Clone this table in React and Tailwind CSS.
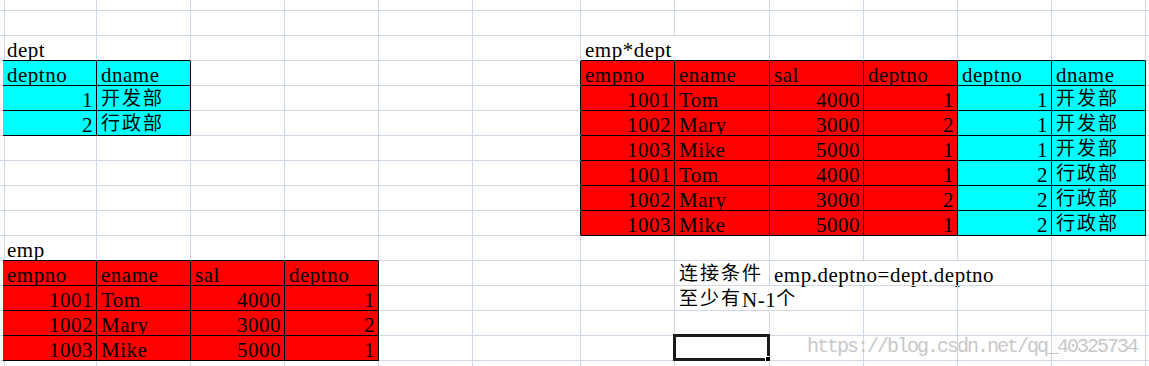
const CJK = /([\u3400-\u9fff]+)/;

const emps = [
  [1001, 'Tom', 4000, 1],
  [1002, 'Mary', 3000, 2],
  [1003, 'Mike', 5000, 1],
];
const depts = [
  [1, '开发部'],
  [2, '行政部'],
];

// sheet contents keyed by "row-col"
const cells = {};
const put = (r, c, text, right = false) => {
  cells[`${r}-${c}`] = { text: String(text), right };
};

put(2, 1, 'dept');
put(3, 1, 'deptno');
put(3, 2, 'dname');
depts.forEach(([no, name], i) => {
  put(4 + i, 1, no, true);
  put(4 + i, 2, name);
});

put(2, 7, 'emp*dept');
['empno', 'ename', 'sal', 'deptno', 'deptno', 'dname'].forEach((t, i) => put(3, 7 + i, t));
let row = 4;
depts.forEach((d) =>
  emps.forEach((e) => {
    put(row, 7, e[0], true);
    put(row, 8, e[1]);
    put(row, 9, e[2], true);
    put(row, 10, e[3], true);
    put(row, 11, d[0], true);
    put(row, 12, d[1]);
    row++;
  })
);

put(10, 1, 'emp');
['empno', 'ename', 'sal', 'deptno'].forEach((t, i) => put(11, 1 + i, t));
emps.forEach((e, i) => {
  put(12 + i, 1, e[0], true);
  put(12 + i, 2, e[1]);
  put(12 + i, 3, e[2], true);
  put(12 + i, 4, e[3], true);
});

put(11, 8, '连接条件');
put(11, 9, 'emp.deptno=dept.deptno');
put(12, 8, '至少有N-1个');

const fill = (r, c) => {
  if (r >= 3 && r <= 5 && c >= 1 && c <= 2) return 'cyan';
  if (r >= 3 && r <= 9 && c >= 7 && c <= 10) return 'red';
  if (r >= 3 && r <= 9 && c >= 11 && c <= 12) return 'cyan';
  if (r >= 11 && r <= 14 && c >= 1 && c <= 4) return 'red';
  return null;
};

// gridlines hidden where text spills into the next cell
const spill = new Set(['2-7', '11-9', '11-10', '12-8']);

const ROWS = 16;
const COLS = 14;
const SELECTED = '14-8';

const Text = ({ s }) =>
  s.split(CJK).map((part, i) =>
    CJK.test(part) ? (
      <span
        key={i}
        className="font-['Noto_Sans_CJK_SC',sans-serif] text-[19px] leading-[14px] tracking-[2px] align-[2px]"
      >
        {part}
      </span>
    ) : (
      part
    )
  );

const Cell = ({ r, c }) => {
  const key = `${r}-${c}`;
  const cell = cells[key];
  const f = fill(r, c);
  const bg = f === 'red' ? 'bg-[#ff0000]' : f === 'cyan' ? 'bg-[#00ffff]' : '';

  let right = 'border-r border-r-[#d0d7e5]';
  if (c === COLS - 1) right = '';
  else if (spill.has(key)) right = 'border-r border-r-transparent';
  else if (f || fill(r, c + 1)) right = 'border-r border-r-black';

  let bottom = 'border-b border-b-[#d0d7e5]';
  if (r === ROWS - 1) bottom = '';
  else if (f || fill(r + 1, c)) bottom = 'border-b border-b-black';

  const align = cell?.right ? 'justify-end pr-[3px]' : 'justify-start pl-[4px]';
  const pos = key === SELECTED ? 'relative' : '';

  return (
    <div className={`flex min-w-0 items-end whitespace-nowrap ${pos} ${align} ${bg} ${right} ${bottom}`}>
      {cell && (
        <span className="text-[21px] leading-[20px] tracking-[0.5px] text-black">
          <Text s={cell.text} />
        </span>
      )}
      {key === SELECTED && (
        <>
          <div className="pointer-events-none absolute -left-[2px] -top-[2px] h-[27px] w-[97px] border-[3px] border-[#1a1a1a]" />
          <div className="pointer-events-none absolute left-[90px] top-[20px] h-[6px] w-[6px] border border-white bg-black" />
        </>
      )}
    </div>
  );
};

export default function App() {
  const grid = [];
  for (let r = 0; r < ROWS; r++) {
    for (let c = 0; c < COLS; c++) grid.push(<Cell key={`${r}-${c}`} r={r} c={c} />);
  }

  return (
    <div className="relative h-[366px] w-full overflow-hidden bg-white font-['Liberation_Serif','Noto_Sans_CJK_SC',serif]">
      <div className="grid h-full grid-cols-[3px_94px_94px_94px_94px_94px_108px_94px_95px_94px_94px_94px_94px_1fr] grid-rows-[11px_repeat(14,25px)_1fr]">
        {grid}
      </div>
      <div className="pointer-events-none absolute left-[807px] top-[337px] font-['Liberation_Mono',monospace] text-[20px] leading-[20px] tracking-[-2px] text-[#c8c8c8]">
        https://blog.csdn.net/qq_40325734
      </div>
    </div>
  );
}
